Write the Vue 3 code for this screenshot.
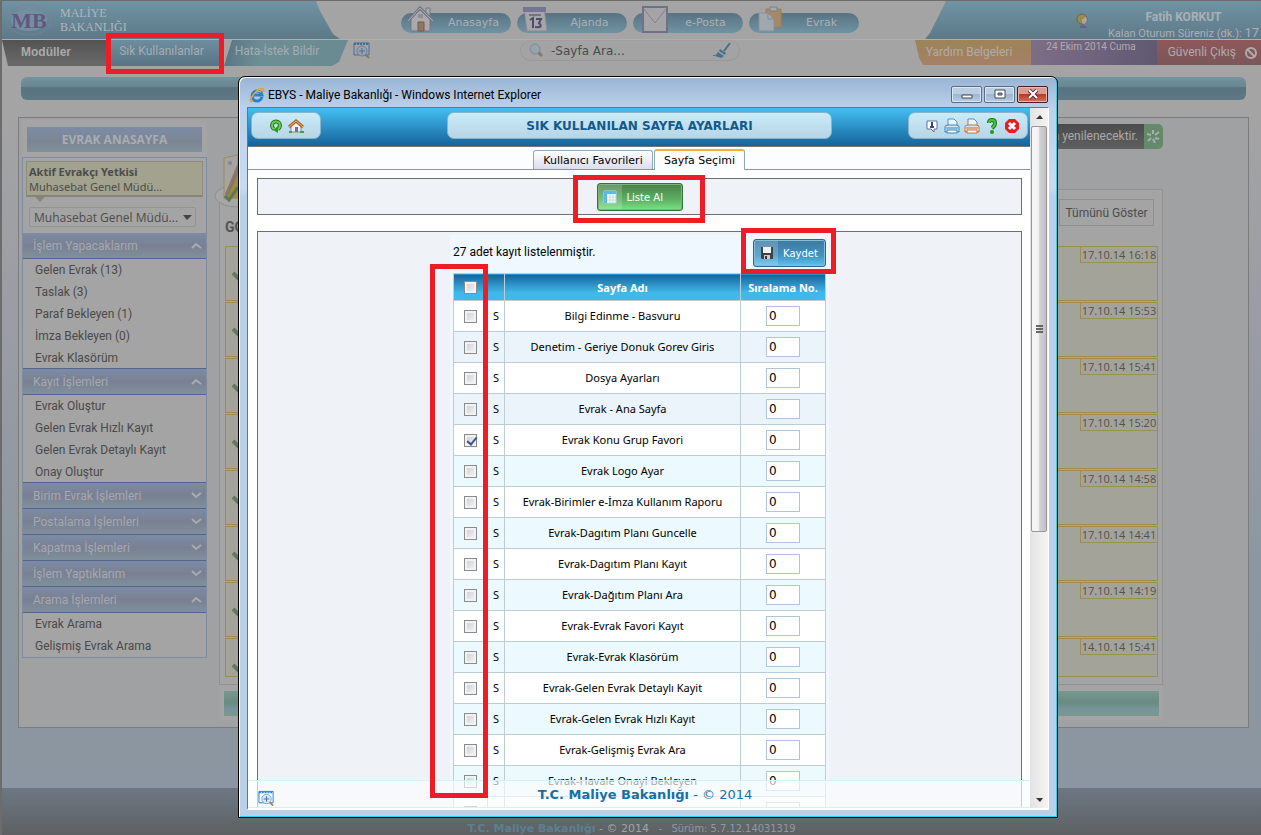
<script setup>
import { ref } from 'vue'

const nav = ['Anasayfa', 'Ajanda', 'e-Posta', 'Evrak']

const groups = [
  { title: 'İşlem Yapacaklarım', open: true, items: ['Gelen Evrak (13)', 'Taslak (3)', 'Paraf Bekleyen (1)', 'İmza Bekleyen (0)', 'Evrak Klasörüm'] },
  { title: 'Kayıt İşlemleri', open: true, items: ['Evrak Oluştur', 'Gelen Evrak Hızlı Kayıt', 'Gelen Evrak Detaylı Kayıt', 'Onay Oluştur'] },
  { title: 'Birim Evrak İşlemleri', open: false, items: [] },
  { title: 'Postalama İşlemleri', open: false, items: [] },
  { title: 'Kapatma İşlemleri', open: false, items: [] },
  { title: 'İşlem Yaptıklarım', open: false, items: [] },
  { title: 'Arama İşlemleri', open: true, items: ['Evrak Arama', 'Gelişmiş Evrak Arama'] },
]

const dates = ['17.10.14 16:18', '17.10.14 15:53', '17.10.14 15:41', '17.10.14 15:20', '17.10.14 14:58', '17.10.14 14:41', '17.10.14 14:19', '14.10.14 15:41']

const rows = ref([
  'Bilgi Edinme - Basvuru',
  'Denetim - Geriye Donuk Gorev Giris',
  'Dosya Ayarları',
  'Evrak - Ana Sayfa',
  'Evrak Konu Grup Favori',
  'Evrak Logo Ayar',
  'Evrak-Birimler e-İmza Kullanım Raporu',
  'Evrak-Dagıtım Planı Guncelle',
  'Evrak-Dagıtım Planı Kayıt',
  'Evrak-Dağıtım Planı Ara',
  'Evrak-Evrak Favori Kayıt',
  'Evrak-Evrak Klasörüm',
  'Evrak-Gelen Evrak Detaylı Kayit',
  'Evrak-Gelen Evrak Hızlı Kayıt',
  'Evrak-Gelişmiş Evrak Ara',
  'Evrak-Havale Onayi Bekleyen',
  '',
].map((name, i) => ({ name, checked: i === 4, order: '0' })))

const search = ref('-Sayfa Ara...')
const allChecked = ref(false)
</script>

<template>
  <div class="page">
    <header class="top">
      <div class="brand">
        <svg class="logo" width="48" height="36" viewBox="0 0 48 36" aria-hidden="true">
          <ellipse cx="24" cy="18" rx="22" ry="15" fill="none" stroke="#80809a" stroke-width="1" stroke-dasharray="3 1" />
          <ellipse cx="24" cy="18" rx="18" ry="11" fill="#748fa0" />
          <text x="24" y="26" text-anchor="middle" class="logo-text">MB</text>
        </svg>
        <div class="brand-name">MALİYE<br>BAKANLIĞI</div>
      </div>
      <nav class="nav">
        <a v-for="(n, i) in nav" :key="n" href="#" class="nav-btn">
          <svg class="nav-icon" width="32" height="28" viewBox="0 0 32 28" aria-hidden="true">
            <template v-if="i === 0">
              <path d="M7 14v12h19V14L16 5z" fill="#aaa" stroke="#77778c" />
              <path d="M22 3h4v8h-4z" fill="#aaa" stroke="#77778c" />
              <path d="M4 16 16 3l13 13" fill="none" stroke="#77778c" stroke-width="3" />
              <path d="M4 16 16 3l13 13" fill="none" stroke="#a8a8ae" stroke-width="1" />
              <path d="M14 17h6v9h-6z" fill="#94745e" stroke="#6c5c58" />
              <path d="M14 9h5v4h-5z" fill="#8e9099" />
            </template>
            <template v-else-if="i === 1">
              <path d="M4 3h20l3 23H7z" fill="#a6a6aa" stroke="#8a8a9c" />
              <path d="M3 2h23v5H3z" fill="#747499" />
              <path d="M9 9h12v2H9z" fill="#806e7c" />
              <path d="m10 15 3-2v10M16 14h5l-2 4q5 5-4 4" fill="none" stroke="#4d4d69" stroke-width="2" />
            </template>
            <template v-else-if="i === 2">
              <path d="M7 2h24v25H7z" fill="#a4a4a6" stroke="#70708a" stroke-width="2" />
              <path d="m8 4 11 14L30 4" fill="none" stroke="#83838f" stroke-width="1" />
            </template>
            <template v-else>
              <path d="M14 4h15v18H14z" fill="#a68964" stroke="#98805c" />
              <path d="M18 2h7v4h-7z" fill="#a4a8aa" stroke="#7d828a" />
              <path d="M7 8h9l6 6v12H7z" fill="#a0a8ae" stroke="#888f9f" />
              <path d="M16 8v6h6" fill="none" stroke="#7f8ca0" />
            </template>
          </svg>
          <span>{{ n }}</span>
        </a>
      </nav>
      <div class="user">
        <svg width="14" height="16" viewBox="0 0 14 16" aria-hidden="true">
          <circle cx="6" cy="6" r="5" fill="#9b8c50" stroke="#6b6345" />
          <path d="M5 6q3 0 4-3l2 2v3l-2 3H6z" fill="#b0a597" stroke="#756c62" stroke-width=".5" />
          <path d="m4 13 3-1 4 2v1H4z" fill="#66608e" />
        </svg>
        <div class="user-info">
          <strong>Fatih KORKUT</strong>
          <div>Kalan Oturum Süreniz (dk.): <span class="mins">17</span></div>
        </div>
      </div>
    </header>

    <div class="menu">
      <div class="menu-left">
        <a href="#" class="tab tab-mod">Modüller</a>
        <a href="#" class="tab tab-sik">Sık Kullanılanlar<i class="mark mark-sik"></i></a>
        <a href="#" class="tab tab-hata">Hata-İstek Bildir</a>
        <svg class="winzoom" width="18" height="17" viewBox="0 0 18 17" aria-hidden="true">
          <path d="M1 1h15v12H1z" fill="#a4a4a4" stroke="#426f9c" stroke-width="1" />
          <path d="M1 2h15" stroke="#426f9c" stroke-width="2" stroke-dasharray="2 1" />
          <path d="m12 12 4 4" stroke="#8a765e" stroke-width="2" />
          <circle cx="9" cy="9" r="5" fill="#98a4b2" stroke="#687f9b" />
          <path d="M9 6v6M6 9h6" stroke="#506c94" />
        </svg>
      </div>
      <div class="search">
        <svg width="15" height="15" viewBox="0 0 15 15" aria-hidden="true">
          <path d="m9 9 4 4" stroke="#8a765e" stroke-width="3" />
          <circle cx="6" cy="6" r="5" fill="#95a3ad" stroke="#7c8a98" />
        </svg>
        <input v-model="search" type="text" aria-label="Sayfa Ara">
        <svg width="18" height="17" viewBox="0 0 18 17" aria-hidden="true">
          <path d="m17 1-6 8" stroke="#48708a" stroke-width="2" />
          <path d="m7 7 6 4-1 2-6-4zM5 10l6 4-3 2-6-2zM0 13h2v1H0z" fill="#48708a" />
        </svg>
      </div>
      <div class="menu-right">
        <a href="#" class="rtab r-help">Yardım Belgeleri</a>
        <span class="rtab r-date">24 Ekim 2014 Cuma</span>
        <a href="#" class="rtab r-exit">Güvenli Çıkış
          <svg width="14" height="14" viewBox="0 0 14 14" aria-hidden="true"><circle cx="7" cy="7" r="5" fill="none" stroke="#b0abab" stroke-width="2" /><path d="m3 3 8 8" stroke="#b0abab" stroke-width="2" /></svg>
        </a>
      </div>
    </div>

    <div class="bar"></div>

    <div class="panel">
      <aside class="side">
        <div class="side-top"><button type="button">EVRAK ANASAYFA</button></div>
        <div class="side-box">
          <div class="tip"><strong>Aktif Evrakçı Yetkisi</strong><span>Muhasebat Genel Müdü...</span></div>
          <div class="pick">
            <select aria-label="Birim"><option>Muhasebat Genel Müdü...</option></select>
            <svg width="9" height="5" viewBox="0 0 9 5" aria-hidden="true"><path d="M0 0h9L4 5z" fill="#454545" /></svg>
          </div>
          <section v-for="g in groups" :key="g.title">
            <button type="button" class="ghead">
              {{ g.title }}
              <svg width="11" height="7" viewBox="0 0 11 7" aria-hidden="true"><path :d="g.open ? 'M1 6l4-4 5 4' : 'M1 1l4 4 5-4'" fill="none" stroke="#aaaab0" stroke-width="2" /></svg>
            </button>
            <ul v-if="g.open"><li v-for="it in g.items" :key="it"><a href="#">{{ it }}</a></li></ul>
          </section>
        </div>
      </aside>

      <main class="main">
        <div class="notice">
          <span>Sayfa yenilenecektir.</span>
          <i><svg width="13" height="13" viewBox="0 0 13 13" aria-hidden="true"><path d="M6 0v4M12 2 8 5M12 9 8 8M8 13 6 9M1 11l3-3M0 4l4 1" stroke="#a8aeaa" stroke-width="2" /></svg></i>
        </div>
        <svg class="paper" width="24" height="54" viewBox="0 0 24 54" aria-hidden="true">
          <ellipse cx="24" cy="42" rx="23" ry="11" fill="#a6a6a6" stroke="#8f8f8f" />
          <path d="M10 4 24 1v43l-14 1z" fill="#a4a4a2" stroke="#a08c50" />
          <circle cx="16" cy="9" r="2" fill="#87878c" />
          <path d="M24 12 10 44h14z" fill="#9f8a3e" />
          <path d="M24 9 11 40l3 2L24 20z" fill="#8b7468" />
          <path d="m11 42 4 4 9-13" fill="none" stroke="#58785c" stroke-width="3" />
        </svg>
        <div class="list">
          <div class="list-head"><h2>GO</h2><button type="button">Tümünü Göster</button></div>
          <div v-for="(d, i) in dates" :key="i" class="entry">
            <svg width="16" height="14" viewBox="0 0 16 14" aria-hidden="true"><path d="m1 5 5 5 9-9" fill="none" stroke="#5c7d64" stroke-width="4" /></svg>
            <time>{{ d }}</time>
          </div>
        </div>
        <div class="green"><div></div></div>
      </main>
    </div>

    <footer class="foot"><strong>T.C. Maliye Bakanlığı</strong> <span class="lite">- © 2014</span> <span class="ver">- &nbsp; Sürüm: 5.7.12.14031319</span></footer>

    <div class="win">
      <div class="title">
        <svg width="16" height="16" viewBox="0 0 16 16" aria-hidden="true">
          <path d="M13 10A5 5 0 1 1 13 8H5" fill="none" stroke="#2581d4" stroke-width="3" />
          <path d="M12 5Q9 3 6 6" fill="none" stroke="#7fd0fa" stroke-width="1" />
          <path d="M2 15Q-1 13 5 6T15 2q1 2-2 4 2-4-2-3T3 11q-2 3 1 3z" fill="#f3b62a" stroke="#c78d1c" stroke-width=".5" />
        </svg>
        <span>EBYS - Maliye Bakanlığı - Windows Internet Explorer</span>
        <div class="ctl">
          <button type="button" aria-label="Simge durumuna küçült"><svg width="12" height="11" viewBox="0 0 12 11"><path d="M1 6h10v3H1z" fill="#fff" stroke="#45474f" /></svg></button>
          <button type="button" aria-label="Ekranı kapla"><svg width="12" height="11" viewBox="0 0 12 11"><path d="M1 1h10v8H1z" fill="#fff" stroke="#45474f" /><path d="M4 4h4v2H4z" fill="#9db8d6" stroke="#45474f" /></svg></button>
          <button type="button" class="x" aria-label="Kapat"><svg width="12" height="11" viewBox="0 0 12 11"><path d="m2 1 8 8M10 1 2 9" stroke="#5a3434" stroke-width="4" /><path d="m2 1 8 8M10 1 2 9" stroke="#fff" stroke-width="2" /></svg></button>
        </div>
      </div>

      <div class="client">
        <div class="view">
          <div class="whead">
            <div class="pill">
              <button type="button" aria-label="Yenile"><svg width="16" height="16" viewBox="0 0 16 16"><path d="M6 11a4 4 0 1 1 4 0" fill="none" stroke="#20741d" stroke-width="4" /><path d="M6 11a4 4 0 1 1 4 0" fill="none" stroke="#6ccf4d" stroke-width="2" /><path d="m5 12 5-4v7z" fill="#2e9b28" /></svg></button>
              <button type="button" aria-label="Ana sayfa"><svg width="16" height="16" viewBox="0 0 16 16"><path d="M3 8v6h10V8L8 4z" fill="#eeeef5" stroke="#83889b" /><path d="M7 9h3v5H7z" fill="#747487" /><path d="m1 9 7-6 7 6" fill="none" stroke="#a8642d" stroke-width="3" /><path d="m1 9 7-6 7 6" fill="none" stroke="#eeb069" stroke-width="1" /><path d="M1 14h3M12 14h4" stroke="#45a338" stroke-width="2" /></svg></button>
            </div>
            <h1>SIK KULLANILAN SAYFA AYARLARI</h1>
            <div class="pill tools">
              <button type="button" aria-label="Bilgi"><svg width="16" height="16" viewBox="0 0 16 16"><path d="M3 3h10v8h-3v3l-3-3H3z" fill="#fff" stroke="#69719f" /><path d="M8 4v2M6 9h4M8 6v3" stroke="#334a86" stroke-width="2" /></svg></button>
              <button v-for="c in ['#2e86c1', '#cf6e33']" :key="c" type="button" aria-label="Yazdır"><svg width="16" height="16" viewBox="0 0 16 16"><path d="M4 8V1h6l3 3v4" fill="#e9f6ff" stroke="#6687b8" /><path d="M1 9q0-2 3-2h8q3 0 3 2v5H1z" fill="#d4e6ef" :stroke="c" /><path d="M2 10h12" :stroke="c" stroke-width="1" /><path d="M3 12h10v3H3z" fill="#fff" :stroke="c" /></svg></button>
              <button type="button" aria-label="Yardım"><svg width="16" height="16" viewBox="0 0 16 16"><path d="M5 5q0-3 3-3t3 3-3 5" fill="none" stroke="#1c761c" stroke-width="4" /><path d="M5 5q0-3 3-3t3 3-3 5" fill="none" stroke="#4cc437" stroke-width="2" /><circle cx="8" cy="14" r="2" fill="#22961f" /></svg></button>
              <button type="button" aria-label="Kapat"><svg width="16" height="16" viewBox="0 0 16 16"><path d="M5 1h6l4 4v6l-4 4H5l-4-4V5z" fill="#e81c22" /><path d="m5 5 6 6M11 5l-6 6" stroke="#fff" stroke-width="3" /></svg></button>
            </div>
          </div>

          <div class="tabs">
            <button type="button">Kullanıcı Favorileri</button>
            <button type="button" class="on">Sayfa Seçimi</button>
          </div>

          <div class="body">
            <div class="box tool">
              <div class="marked">
                <button type="button" class="btn green-btn">
                  <span class="bi"><svg width="14" height="14" viewBox="0 0 14 14" aria-hidden="true"><path d="M1 1h12v12H1z" fill="#f7fcff" stroke="#b9d7e1" /><path d="M1 1h12v3H1zM1 1h3v12H1z" fill="#58b9ea" /><path d="M4 7h9M4 10h9M7 4v9M10 4v9" stroke="#c5dcd5" /></svg></span>Liste Al
                </button>
                <i class="mark mark-liste"></i>
              </div>
            </div>
            <div class="box data">
              <div class="sheet">
                <div class="cap">
                  <span>27 adet kayıt listelenmiştir.</span>
                  <div class="marked">
                    <button type="button" class="btn blue-btn">
                      <span class="bi"><svg width="14" height="14" viewBox="0 0 14 14" aria-hidden="true"><path d="M1 1h12v12H2l-1-1z" fill="#3f4246" /><path d="M3 1h8v6H3z" fill="#eff1f3" /><path d="M4 9h6v4H4z" fill="#c9ced3" /><path d="M5 10h2v3H5z" fill="#34373c" /></svg></span>Kaydet
                    </button>
                    <i class="mark mark-save"></i>
                  </div>
                </div>
                <div class="marked">
                  <table>
                    <colgroup><col class="c1"><col class="c2"><col class="c3"><col class="c4"></colgroup>
                    <thead>
                      <tr><th><input v-model="allChecked" type="checkbox" aria-label="Tümünü seç"></th><th></th><th>Sayfa Adı</th><th>Sıralama No.</th></tr>
                    </thead>
                    <tbody>
                      <tr v-for="(r, i) in rows" :key="i">
                        <td><input v-model="r.checked" type="checkbox" :aria-label="r.name || 'Kayıt'"></td>
                        <td>{{ r.name ? 'S' : '' }}</td>
                        <td>{{ r.name }}</td>
                        <td><input v-model="r.order" type="text" :aria-label="'Sıralama ' + r.name"></td>
                      </tr>
                    </tbody>
                  </table>
                  <i class="mark mark-col"></i>
                </div>
              </div>
            </div>
          </div>

          <div class="wfoot">
            <svg width="17" height="17" viewBox="0 0 18 17" aria-hidden="true">
              <path d="M1 1h15v12H1z" fill="#fff" stroke="#1780ee" />
              <path d="M1 2h15" stroke="#1780ee" stroke-width="2" stroke-dasharray="2 1" />
              <path d="m12 12 4 4" stroke="#b5824f" stroke-width="2" />
              <circle cx="9" cy="9" r="5" fill="#d6e9fb" stroke="#7da4d3" />
              <path d="M9 6v6M6 9h6" stroke="#3b73bd" />
            </svg>
            <p><strong>T.C. Maliye Bakanlığı</strong> - © 2014</p>
          </div>
        </div>
        <div class="scroll">
          <svg width="7" height="4" viewBox="0 0 7 4" aria-hidden="true"><path d="M0 4h7L4 0z" fill="#333" /></svg>
          <div class="thumb"><i></i><i></i><i></i></div>
          <svg class="down" width="7" height="4" viewBox="0 0 7 4" aria-hidden="true"><path d="M0 0h7L4 4z" fill="#333" /></svg>
        </div>
      </div>
    </div>
  </div>
</template>

<style>
body { margin: 0; overflow: hidden; }
</style>

<style scoped>
* { box-sizing: border-box; }
button { font: inherit; color: inherit; padding: 0; cursor: pointer; }
a { color: inherit; text-decoration: none; }
.page {
  position: relative; min-height: 100vh; display: flex; flex-direction: column; overflow: hidden;
  border-left: 2px solid #6c6c6c; border-top: 1px solid #6c6c6c;
  font-family: Roboto, "Open Sans", sans-serif; font-size: 12px;
  background: linear-gradient(#a4a4a4 110px, #9b9da4 300px, #8e979f 560px, #8a96a2 100%);
}
.top { display: grid; grid-template-columns: 1fr auto 1fr; height: 38px; }
.brand {
  width: 338px; height: 38px; display: flex; align-items: center; gap: 7px; padding-left: 3px;
  background: linear-gradient(#7093a3, #5d7988);
  clip-path: polygon(0 0, 314px 0, 318px 10px, 331px 33px, 338px 38px, 0 38px);
}
.logo-text { font: bold 22px "Liberation Serif", serif; fill: #62587f; }
.brand-name { font: 12px/14px "Liberation Serif", serif; color: #b0b7bc; }
.nav { display: flex; gap: 6px; padding: 12px 0 0; margin-right: 4px; }
.nav-btn {
  position: relative; width: 110px; height: 20px; border-radius: 10px; padding-left: 36px;
  background: linear-gradient(#587383, #7093a2); color: #a9b0b5;
  font: 11px/20px "DejaVu Sans", sans-serif;
}
.nav-btn span { display: block; text-align: center; }
.nav-icon { position: absolute; left: 3px; bottom: 0; }
.user {
  justify-self: end; width: 336px; height: 38px; display: flex; align-items: flex-start; gap: 18px; justify-content: flex-end; padding: 9px 2px 0 0;
  background: linear-gradient(#7093a3, #5d7988); color: #a9b0b5;
  clip-path: polygon(21px 0, 100% 0, 100% 38px, 0 38px, 5px 32px);
}
.user svg { margin-top: 3px; }
.user-info { text-align: center; font-size: 11px; line-height: 15px; }
.user-info strong { font-size: 12px; }
.user-info .mins { font-size: 13px; }
.menu { display: grid; grid-template-columns: 1fr auto 1fr; height: 38px; border-top: 1px solid #b0b0b0; align-items: start; }
.menu-left, .menu-right { display: flex; height: 26px; }
.menu-right { justify-content: flex-end; }
.tab { position: relative; height: 26px; line-height: 22px; text-align: center; color: #a3adb2; }
.tab-mod { width: 106px; background: linear-gradient(#535353, #6a6a6a); clip-path: polygon(0 0, 100% 0, 100% 100%, 6px 100%); color: #aaa; font: bold 12px/25px "Liberation Sans", sans-serif; padding-right: 18px; }
.tab-sik { width: 116px; background: linear-gradient(#6d8e9e, #587383); padding-right: 9px; z-index: 1; }
.tab-hata { width: 124px; background: linear-gradient(100deg, #587383, #6e8e95 30%, #6a8a91); clip-path: polygon(8px 0, 100% 0, 115px 85%, 108px 100%, 0 100%); padding-right: 18px; }
.winzoom { margin: 2px 0 0 5px; }
.search {
  width: 220px; height: 21px; display: flex; align-items: center; gap: 7px; padding: 0 8px; border-radius: 11px; margin-right: 3px;
  border: 1px solid #999; border-top-color: #9f9f9f; background: #a3a3a3;
}
.search input { flex: 1; min-width: 0; border: 0; padding: 0; background: none; color: #4b4b4b; font: 12px "DejaVu Sans", sans-serif; }
.rtab { height: 25px; line-height: 25px; text-align: center; color: #b0abab; }
.r-help { width: 116px; background: linear-gradient(#9c8458, #a58066); clip-path: polygon(0 0, 100% 0, 100% 100%, 8px 100%, 4px 70%); padding-right: 8px; }
.r-date { width: 126px; background: linear-gradient(100deg, #7e6e88, #605872); font-size: 10px; line-height: 14px; padding-right: 6px; }
.r-exit { width: 104px; background: linear-gradient(#8f575a, #7a5759); display: flex; justify-content: flex-end; align-items: center; gap: 8px; padding-right: 3px; }
.tab-sik, .tab-hata, .r-help, .r-exit { font-size: 12px; }
.bar { height: 23px; margin: 0 15px 0 19px; border-radius: 6px; background: linear-gradient(#7394a0, #69858f 44%, #587380 46%, #5f7885); }
.panel { display: flex; gap: 12px; margin: 17px 12px 0 16px; padding: 2px 85px 6px 3px; border: 1px solid #7c7c7c; background: #a0a1a3; min-height: 610px; align-items: flex-start; }
.side { width: 185px; }
.side-top { background: #a4a4a4; padding: 7px 5px 4px; height: 37px; }
.side-top button { display: block; width: 100%; height: 25px; border: 0; background: linear-gradient(#7e8ba5, #7b8692 60%, #80919b); color: #a9acb3; font-weight: bold; font-family: "Open Sans", sans-serif; }
.side-box { border: 1px solid #7f8b9f; background: #a4a4a4; }
.tip { position: relative; margin: 3px 3px 10px; height: 36px; padding: 2px 2px 0; background: #a2a28e; border: 1px solid #8c8c80; border-bottom: 2px solid #85857c; color: #4c4c4c; display: flex; flex-direction: column; line-height: 15px; font-size: 11px; font-family: "Noto Sans", "Open Sans", sans-serif; }
.tip::after { content: ""; position: absolute; left: 7px; top: 34px; border: 6px solid transparent; border-top-color: #85857c; border-bottom: 0; }
.pick { position: relative; margin: 0 10px 6px 6px; height: 20px; }
.pick select { width: 100%; height: 20px; appearance: none; border: 1px solid #939393; border-radius: 2px; background: none; padding: 0 4px; color: #4c4c4c; font: 12px "Open Sans", sans-serif; }
.pick svg { position: absolute; right: 4px; top: 8px; }
.ghead { width: 100%; height: 26px; border: 0; border-bottom: 1px solid #53658c; display: flex; align-items: center; justify-content: space-between; padding: 0 4px 0 10px; background: linear-gradient(#7d8ba5, #798092 50%, #80909c); color: #a6a8b0; }
ul { list-style: none; margin: 0; padding: 0; }
li { height: 22px; line-height: 23px; padding-left: 12px; color: #4a4a4a; }
section:not(:last-child) ul { box-shadow: 0 -1px #53658c inset; }
.main { position: relative; flex: 1; }
.notice { display: flex; justify-content: flex-end; height: 25px; margin-top: 4px; line-height: 24px; }
.notice span { background: linear-gradient(#4b4b4b, #606060); color: #a8a8a8; padding: 0 6px 0 40px; border-radius: 5px 0 0 5px; }
.notice i { width: 19px; background: #658a6b; border-radius: 0 5px 5px 0; display: grid; place-items: center; }
.paper { position: absolute; left: -5px; top: 34px; }
.list { margin-top: 40px; border: 1px solid #929292; background: #a4a4a4; padding: 9px 4px 7px 5px; }
.list-head { display: flex; justify-content: space-between; height: 47px; align-items: flex-start; }
.list-head h2 { margin: 18px 0 0; font-size: 14px; line-height: 20px; color: #555; }
.list-head button { height: 27px; width: 95px; margin-right: 4px; border: 1px solid #8f8f8f; background: none; color: #4d4d4d; }
.entry { height: 55px; margin-bottom: 1px; border: 1px solid #9c8d55; background: #a4a399; display: flex; justify-content: space-between; align-items: flex-start; }
.entry:last-child { height: 39px; margin: 0; }
.entry svg { margin: 21px 0 0 6px; }
.entry time { height: 16px; line-height: 15px; width: 77px; text-align: center; white-space: nowrap; border-left: 1px solid #9c8d55; border-bottom: 1px solid #9c8d55; color: #515151; font-size: 11px; font-family: "Open Sans", sans-serif; }
.green { background: #a4a4a4; padding: 6px 4px 5px 5px; }
.green div { height: 25px; background: linear-gradient(#78978f, #698b82 45%, #77959a 75%, #78988f); }
.foot { margin-top: auto; height: 47px; padding-top: 33px; text-align: center; background: linear-gradient(#6d7883, #5d6062); font: 11px/16px "DejaVu Sans", sans-serif; color: #8f99a0; white-space: pre-wrap; }
.foot strong { color: #5d7f90; }
.foot .lite { color: #a0a4a6; margin-right: 6px; }
.foot .ver { font-family: "DejaVu Sans Condensed", "DejaVu Sans", sans-serif; }

.win {
  position: absolute; left: 236px; right: 203px; top: 75px; bottom: 17px; display: flex; flex-direction: column;
  border: 1px solid #000; border-radius: 7px 7px 0 0; padding: 0 8px 7px;
  background: linear-gradient(#98b4d3, #bbd0ea 30px, #c9dbf0 110px, #bad0ea 120px);
  box-shadow: inset 1px 1px #fff, inset -1px -1px #2ed1e9;
}
.title { display: flex; align-items: center; gap: 3px; height: 30px; padding: 5px 0 0 2px; color: #000; }
.ctl { margin-left: auto; display: flex; gap: 2px; align-self: flex-start; margin-top: 4px; padding-right: 1px; }
.ctl button { width: 31px; height: 17px; border: 1px solid #5b6b80; border-radius: 2px; box-shadow: inset 0 0 0 1px #dce8f5; background: linear-gradient(#bccee2 50%, #9fb6d0 50%, #b7cde6); display: grid; place-items: center; }
.ctl .x { border-color: #4a1a1c; background: linear-gradient(#dd9a8f 50%, #b93b25 50%, #d3705a); box-shadow: inset 0 0 0 1px #e9b9b0; }
.client { flex: 1; min-height: 0; display: flex; border: 1px solid #6e7279; border-right-color: #fff; border-bottom: 2px solid #fff; background: #fff; }
.view { position: relative; flex: 1; min-width: 0; overflow: hidden; background: #fff; }
.whead { height: 39px; display: flex; justify-content: space-between; align-items: flex-start; padding: 4px 2px 0 3px; background: linear-gradient(#43bff2, #14639a); border-bottom: 1px solid #777; box-shadow: 0 1px #b7bcc1; }
.whead .pill, .whead h1 { height: 27px; border-radius: 7px; border: 1px solid #8bb4c9; background: linear-gradient(#c9ebfa, #b8d5e4); }
.pill { display: flex; justify-content: center; align-items: center; gap: 4px; width: 70px; }
.pill.tools { width: 120px; padding-left: 8px; }
.pill button { border: 0; background: none; width: 16px; height: 16px; }
.whead h1 { width: 385px; margin: 0 0 0 50px; text-align: center; font: bold 12px/26px "DejaVu Sans", sans-serif; color: #12598c; }
.tabs { height: 23px; display: flex; justify-content: center; align-items: flex-end; gap: 1px; background: #fcfdff; border-bottom: 1px solid #8c979d; }
.tabs button { height: 19px; width: 120px; border: 1px solid #91a7b4; border-bottom: 0; border-radius: 3px 3px 0 0; background: linear-gradient(#fff, #dcdcee); color: #000; font: 11px/17px "DejaVu Sans", sans-serif; }
.tabs .on { width: 91px; height: 21px; border-top: 2px solid #f6b02f; background: #fcfdff; margin-bottom: -1px; }
.body { padding: 8px 8px 0 9px; }
.box { border: 1px solid #6c6e73; background: #eff3f8; }
.tool { height: 37px; display: flex; justify-content: center; padding-top: 4px; }
.data { margin-top: 16px; padding: 3px 0 20px; }
.sheet { width: 379px; margin: 0 auto; padding: 4px 3px; background: #eff8ff; }
.marked { position: relative; }
.mark { position: absolute; border: 5px solid #ee1c24; z-index: 5; pointer-events: none; }
.mark-sik { left: -2px; top: -7px; width: 118px; height: 41px; }
.mark-liste { inset: -8px -22px -9px -24px; }
.mark-save { inset: -11px -10px -7px -12px; }
.mark-col { left: -23px; top: -9px; width: 58px; height: 534px; }
.btn { display: flex; align-items: center; height: 28px; border-radius: 3px; padding: 1px; color: #fff; font: 10px "DejaVu Sans", sans-serif; gap: 5px; }
.bi { width: 23px; height: 24px; display: grid; place-items: center; background: rgba(255, 255, 255, .18); }
.green-btn { width: 86px; border: 1px solid #35713c; background: linear-gradient(#49804b, #5cb163 60%, #78e382); box-shadow: inset 0 0 0 1px #7db57f; }
.blue-btn { width: 73px; border: 1px solid #216a97; background: linear-gradient(#42789d, #3f94c2 60%, #5fc2ee); box-shadow: inset 0 0 0 1px #86bddb; }
.cap { display: flex; justify-content: space-between; align-items: flex-start; height: 34px; color: #000; }
.cap span { line-height: 27px; }
.cap .bi { line-height: 10px; }
table { width: 373px; border-collapse: collapse; table-layout: fixed; font-size: 11px; font-family: "Noto Sans", "Open Sans", sans-serif; color: #000; }
.c1 { width: 34px; } .c2 { width: 17px; } .c3 { width: 236px; } .c4 { width: 85px; }
th, td { border: 1px solid #bccdd6; padding: 0; text-align: center; }
th { height: 27px; color: #fff; background: linear-gradient(#14639a, #41b8ea 70%); }
td { height: 31px; padding-bottom: 1px; background: #fff; }
td:first-child { padding: 1px 0 0; }
tbody tr:nth-child(even) td { background: #ebf4fb; }
tbody tr:nth-child(6) td, tbody tr:nth-child(n+8):nth-child(even) td { background: #ecf9fe; }
input[type=checkbox] { display: block; appearance: none; width: 13px; height: 13px; margin: 0 auto; border: 1px solid #8a8b8c; background: linear-gradient(135deg, #c8ccd2, #f6f6f6); box-shadow: inset 0 0 0 2px #f2f2f2; position: relative; }
input[type=checkbox]:checked::after { content: ""; position: absolute; left: 4px; top: 0; width: 4px; height: 8px; border: solid #3e5395; border-width: 0 2px 2px 0; transform: rotate(40deg); }
td input[type=text] { display: block; width: 34px; height: 20px; margin: 0 auto; border: 1px solid #b0c4de; background: #fff; padding: 1px 2px 0; font: 12px "DejaVu Sans", sans-serif; color: #000; }
.wfoot { position: absolute; left: 0; right: 0; bottom: 0; height: 28px; background: rgba(250, 252, 254, .66); border-top: 1px solid #d3f0fb; border-bottom: 1px solid #d3f0fb; color: #1670a6; font: 13px/28px "DejaVu Sans", sans-serif; }
.wfoot svg { position: absolute; left: 10px; top: 9px; }
.wfoot p { margin: 0; padding-left: 12px; text-align: center; }
.scroll { width: 18px; background: linear-gradient(90deg, #e3e3e3, #f4f4f4); display: flex; flex-direction: column; align-items: center; padding: 7px 0 6px; }
.thumb { width: 16px; flex: 0 1 406px; margin-top: 7px; border: 1px solid #979797; border-radius: 2px; background: linear-gradient(90deg, #f4f4f4 45%, #d2d2d6 55%, #c0c0c6); display: flex; flex-direction: column; justify-content: center; align-items: center; gap: 1px; }
.thumb i { width: 7px; height: 2px; background: #666; }
.down { margin-top: auto; }
</style>
